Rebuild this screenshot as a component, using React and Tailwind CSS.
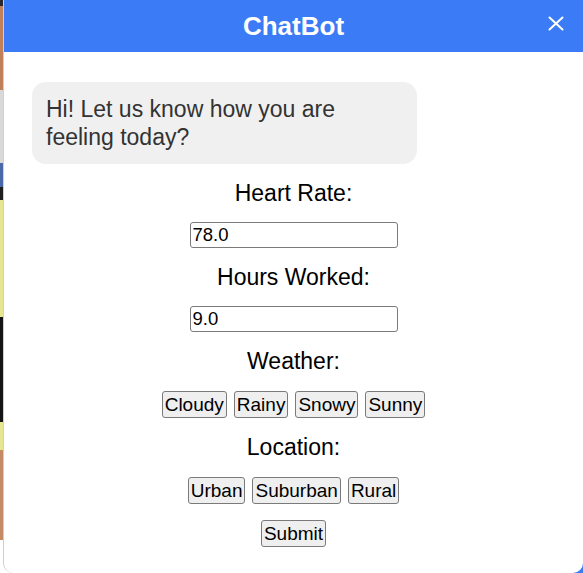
import { useState } from 'react';

const weatherOptions = ['Cloudy', 'Rainy', 'Snowy', 'Sunny'];
const locationOptions = ['Urban', 'Suburban', 'Rural'];

const OptionButton = ({ label, onClick }) => (
  <button
    type="button"
    onClick={onClick}
    className="h-[27px] rounded-[3px] border border-[#7a7a7a] bg-[#efefef] px-[2px] text-[19px] leading-[22px] text-black"
  >
    {label}
  </button>
);

const App = () => {
  const [heartRate, setHeartRate] = useState('78.0');
  const [hoursWorked, setHoursWorked] = useState('9.0');
  const [weather, setWeather] = useState('');
  const [location, setLocation] = useState('');

  return (
    <div className="relative flex h-[573px] w-[583px] overflow-hidden bg-white font-['Liberation_Sans',Arial,sans-serif]">
      {/* page behind the chat window */}
      <div className="w-[3px] shrink-0 bg-[linear-gradient(to_bottom,#2a2a2a_0px,#2a2a2a_6px,#c0805a_6px,#c0805a_90px,#d9d9d9_90px,#d9d9d9_163px,#4a68a8_163px,#4a68a8_187px,#1e1e1e_187px,#1e1e1e_200px,#e6e690_200px,#e6e690_317px,#141414_317px,#141414_422px,#e6e690_422px,#e6e690_450px,#c48a66_450px,#c48a66_540px,#ffffff_540px)]" />
      <div className="absolute bottom-0 right-0 h-[12px] w-[12px] bg-[#3b7bf6]" />

      {/* chat window */}
      <div className="relative flex w-[580px] flex-col rounded-b-[10px] border-l border-[#cfcfcf] bg-white">
        {/* Header */}
        <div className="relative flex h-[52px] shrink-0 items-center justify-center bg-[#3b7bf6]">
          <h1 className="text-[26px] font-bold leading-[30px] text-white">ChatBot</h1>
          <button type="button" className="absolute right-[19px] top-[16px] text-white">
            <svg width="16" height="15" viewBox="0 0 16 15" fill="none" stroke="currentColor" strokeWidth="2" strokeLinecap="round">
              <line x1="1.5" y1="1.5" x2="14.5" y2="13.5" />
              <line x1="14.5" y1="1.5" x2="1.5" y2="13.5" />
            </svg>
          </button>
        </div>

        <div className="flex flex-col items-center">
          {/* Bot message */}
          <div className="mt-[30px] ml-[28px] w-[385px] self-start rounded-[14px] bg-[#f0f0f0] px-[14px] py-[13px] text-[23px] leading-[28px] text-[#333]">
            Hi! Let us know how you are feeling today?
          </div>

          {/* Heart rate */}
          <label className="mt-[16px] text-[23px] leading-[26px] text-black">Heart Rate:</label>
          <input
            type="text"
            value={heartRate}
            onChange={(e) => setHeartRate(e.target.value)}
            className="mt-[16px] h-[26px] w-[208px] rounded-[3px] border border-[#7a7a7a] px-[2px] text-[18.5px] text-black outline-none"
          />

          {/* Hours worked */}
          <label className="mt-[16px] text-[23px] leading-[26px] text-black">Hours Worked:</label>
          <input
            type="text"
            value={hoursWorked}
            onChange={(e) => setHoursWorked(e.target.value)}
            className="mt-[16px] h-[26px] w-[208px] rounded-[3px] border border-[#7a7a7a] px-[2px] text-[18.5px] text-black outline-none"
          />

          {/* Weather */}
          <label className="mt-[16px] text-[23px] leading-[26px] text-black">Weather:</label>
          <div className="mt-[17px] flex gap-[7px]">
            {weatherOptions.map((w) => (
              <OptionButton key={w} label={w} onClick={() => setWeather(w)} />
            ))}
          </div>

          {/* Location */}
          <label className="mt-[16px] text-[23px] leading-[26px] text-black">Location:</label>
          <div className="mt-[17px] flex gap-[7px]">
            {locationOptions.map((l) => (
              <OptionButton key={l} label={l} onClick={() => setLocation(l)} />
            ))}
          </div>

          {/* Submit */}
          <div className="mt-[16px]">
            <OptionButton label="Submit" onClick={() => console.log({ heartRate, hoursWorked, weather, location })} />
          </div>
        </div>
      </div>
    </div>
  );
};

export default App;
